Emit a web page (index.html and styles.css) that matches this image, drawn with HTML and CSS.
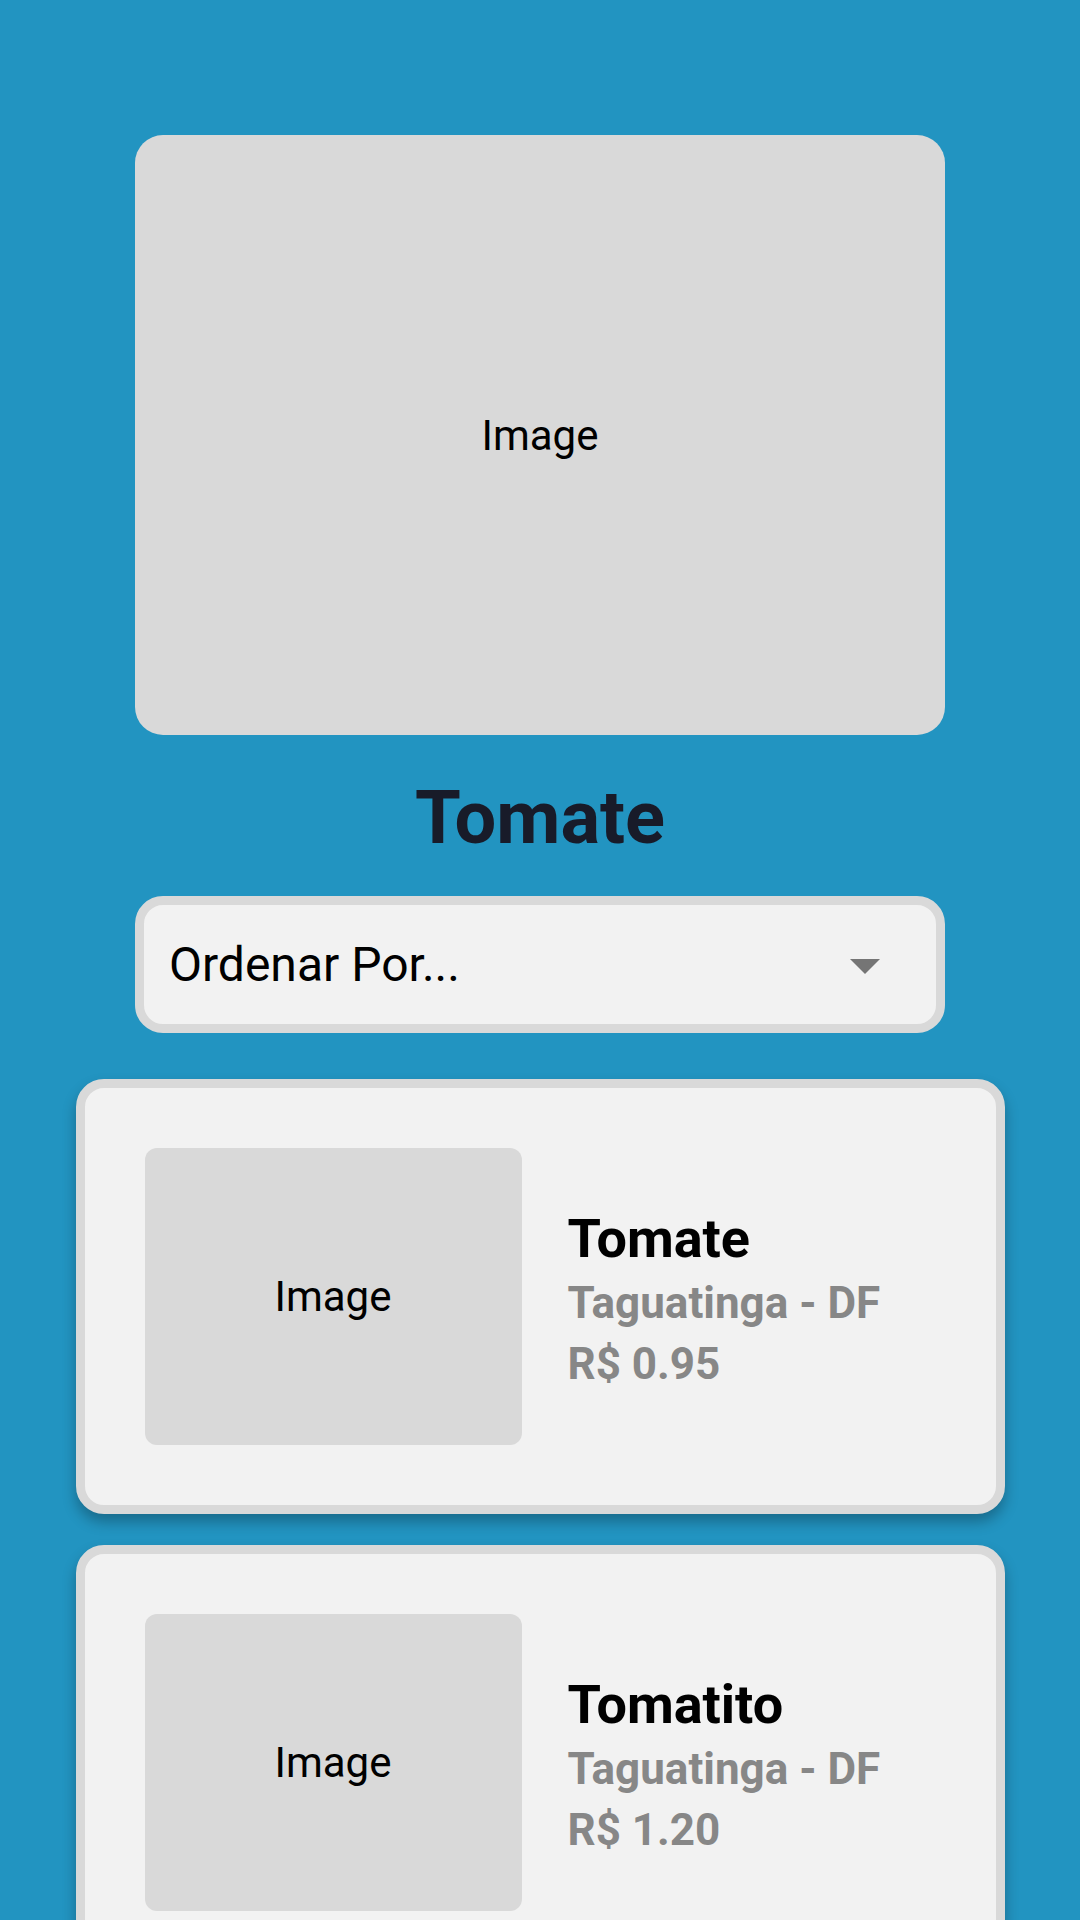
FILE: index.html
```html
<!DOCTYPE html>
<html lang="pt-BR">
<head>
<meta charset="utf-8">
<title>Tomate</title>
<link rel="stylesheet" href="styles.css">
</head>
<body>
<main class="page">
  <div class="hero-image"><span>Image</span></div>
  <h1 class="title">Tomate</h1>
  <div class="select">
    <span class="select-label">Ordenar Por...</span>
    <span class="select-arrow"></span>
  </div>
  <ul class="list">
    <li class="card">
      <div class="thumb"><span>Image</span></div>
      <div class="info">
        <div class="name">Tomate</div>
        <div class="loc">Taguatinga - DF</div>
        <div class="price">R$ 0.95</div>
      </div>
    </li>
    <li class="card">
      <div class="thumb"><span>Image</span></div>
      <div class="info">
        <div class="name">Tomatito</div>
        <div class="loc">Taguatinga - DF</div>
        <div class="price">R$ 1.20</div>
      </div>
    </li>
  </ul>
</main>
</body>
</html>
```
FILE: styles.css
```css
* { box-sizing: border-box; }
html, body {
  margin: 0;
  padding: 0;
  background: #2294c1;
  font-family: Roboto, "Noto Sans", "Liberation Sans", sans-serif;
  height: 1920px;
  overflow: hidden;
}
.page {
  display: flex;
  flex-direction: column;
  align-items: center;
  padding-top: 135px;
}
.hero-image {
  width: 810px;
  height: 600px;
  background: #d9d9d9;
  border-radius: 28px;
  display: flex;
  align-items: center;
  justify-content: center;
  font-size: 42px;
  color: #000;
}
.title {
  margin: 41px 0 0;
  font-size: 74px;
  line-height: 84px;
  font-weight: 700;
  color: #181b29;
}
.select {
  margin-top: 36px;
  width: 810px;
  height: 137px;
  border: 9px solid #d9d9d9;
  border-radius: 28px;
  background: #f2f2f2;
  display: flex;
  align-items: center;
  justify-content: space-between;
  padding: 0 56px 0 25px;
}
.select-label {
  font-size: 48px;
  line-height: 56px;
  color: #000;
}
.select-arrow {
  width: 0;
  height: 0;
  border-left: 15px solid transparent;
  border-right: 15px solid transparent;
  border-top: 15px solid #757575;
  margin-top: 4px;
}
.list {
  list-style: none;
  margin: 46px 0 0;
  padding: 0;
  display: flex;
  flex-direction: column;
  gap: 31px;
}
.card {
  width: 929px;
  border: 9px solid #d9d9d9;
  border-radius: 28px;
  background: #f2f2f2;
  padding: 60px;
  display: flex;
  align-items: center;
  gap: 46px;
  box-shadow: 0 8px 14px rgba(0, 0, 0, 0.28);
}
.thumb {
  width: 377px;
  height: 297px;
  flex: none;
  background: #d9d9d9;
  border-radius: 12px;
  display: flex;
  align-items: center;
  justify-content: center;
  font-size: 42px;
  color: #000;
}
.info {
  display: flex;
  flex-direction: column;
  padding-top: 10px;
}
.name {
  font-size: 54px;
  line-height: 61px;
  font-weight: 700;
  color: #000;
}
.loc, .price {
  font-size: 44px;
  line-height: 61px;
  font-weight: 700;
  color: #878787;
}
.loc { margin-top: 4px; }
```
